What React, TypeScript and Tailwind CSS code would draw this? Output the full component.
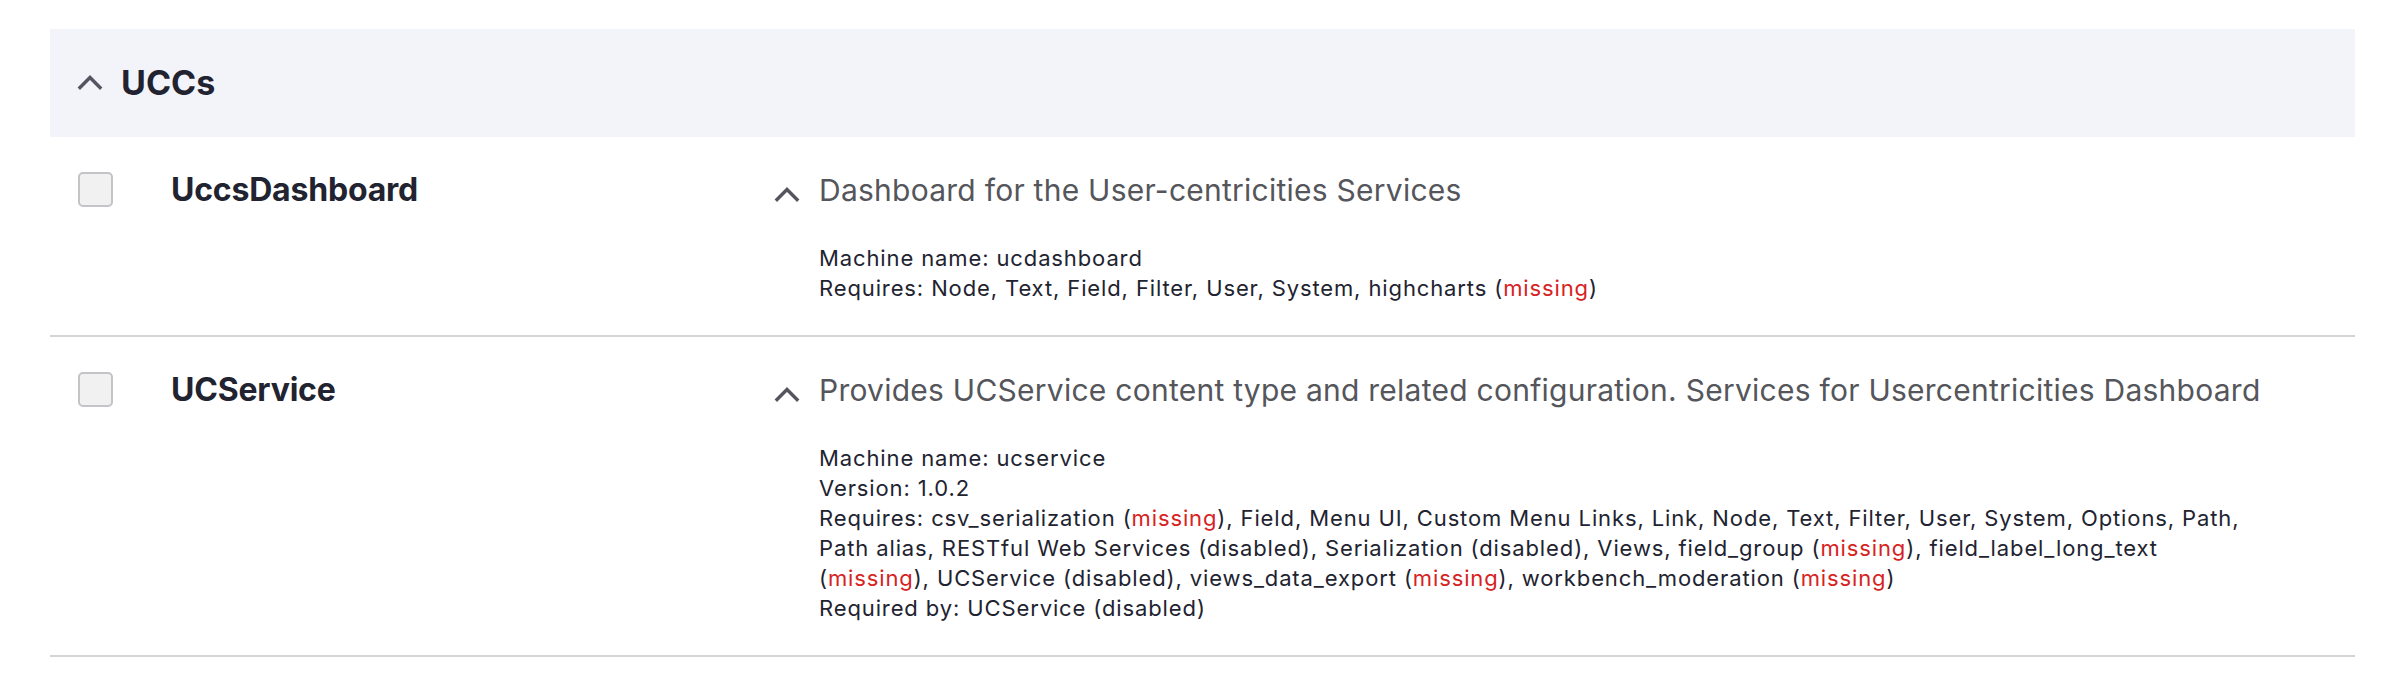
import React from "react";

const Chevron = ({ className }: { className?: string }) => (
  <svg className={className} viewBox="0 0 26 16" fill="none" stroke="#545560" strokeWidth="3.4" strokeLinecap="square" strokeLinejoin="miter">
    <path d="M3 13.5 L13 3.5 L23 13.5" />
  </svg>
);

const Missing = () => <span className="text-[#d72222]">missing</span>;

const Checkbox = () => (
  <div className="w-[35px] h-[35px] shrink-0 rounded-[5px] border-2 border-[#c4c4c8] bg-[#f1f1f1]" />
);

function Row({ name, title, children }: { name: string; title: string; children: React.ReactNode }) {
  return (
    <div className="flex border-b-2 border-[#d4d4d8] pt-[35px] pb-[32px] pl-[28px]">
      <Checkbox />
      <div className="w-[661px] shrink-0 pl-[58px] text-[32px] leading-[35px] font-bold text-[#222330] tracking-[-0.2px]">
        {name}
      </div>
      <div className="flex-1 flex">
        <Chevron className="w-[26px] h-[16px] mt-[14px] shrink-0" />
        <div className="pl-[19px]">
          <div className="text-[30px] leading-[37px] tracking-[0.25px] text-[#55565b]">{title}</div>
          <div className="mt-[34px] text-[22px] leading-[30px] tracking-[0.88px] text-[#222330] whitespace-nowrap">{children}</div>
        </div>
      </div>
    </div>
  );
}

export default function App() {
  return (
    <div className="min-h-[686px] bg-white pt-[29px] pl-[50px] pr-[37px]" style={{ fontFamily: "Inter, 'Liberation Sans', sans-serif" }}>
      <div className="h-[108px] bg-[#f3f4f9] flex items-center pl-[27px]">
        <Chevron className="w-[26px] h-[16px] mb-[2px]" />
        <span className="ml-[18px] text-[34px] font-bold text-[#222330] leading-none">UCCs</span>
      </div>
      <Row name="UccsDashboard" title="Dashboard for the User-centricities Services">
        <div>Machine name: ucdashboard</div>
        <div>
          Requires: Node, Text, Field, Filter, User, System, highcharts (<Missing />)
        </div>
      </Row>
      <Row
        name="UCService"
        title="Provides UCService content type and related configuration. Services for Usercentricities Dashboard"
      >
        <div>Machine name: ucservice</div>
        <div>Version: 1.0.2</div>
        <div>
          Requires: csv_serialization (<Missing />), Field, Menu UI, Custom Menu Links, Link, Node, Text, Filter, User, System, Options, Path,
          <br />
          Path alias, RESTful Web Services (disabled), Serialization (disabled), Views, field_group (<Missing />), field_label_long_text
          <br />
          (<Missing />), UCService (disabled), views_data_export (<Missing />), workbench_moderation (<Missing />)
        </div>
        <div>Required by: UCService (disabled)</div>
      </Row>
    </div>
  );
}
